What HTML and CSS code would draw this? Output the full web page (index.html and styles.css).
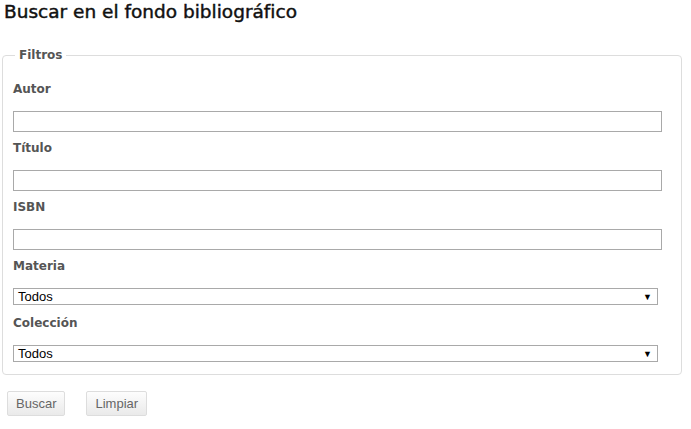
FILE: index.html
```html
<!DOCTYPE html>
<html lang="es">
<head>
<meta charset="utf-8">
<title>Buscar en el fondo bibliográfico</title>
<link rel="stylesheet" href="styles.css">
</head>
<body>
<h1 class="title">Buscar en el fondo bibliográfico</h1>
<form class="search">
  <fieldset class="filters">
    <legend class="legend">Filtros</legend>
    <div class="field">
      <label class="label" for="autor">Autor</label>
      <input class="text" id="autor" type="text">
    </div>
    <div class="field">
      <label class="label" for="titulo">Título</label>
      <input class="text" id="titulo" type="text">
    </div>
    <div class="field">
      <label class="label" for="isbn">ISBN</label>
      <input class="text" id="isbn" type="text">
    </div>
    <div class="field">
      <label class="label" for="materia">Materia</label>
      <div class="select"><span class="select-value">Todos</span><span class="arrow">▼</span></div>
    </div>
    <div class="field">
      <label class="label" for="coleccion">Colección</label>
      <div class="select"><span class="select-value">Todos</span><span class="arrow">▼</span></div>
    </div>
  </fieldset>
  <div class="actions">
    <button class="btn" type="button">Buscar</button>
    <button class="btn" type="button">Limpiar</button>
  </div>
</form>
</body>
</html>
```
FILE: styles.css
```css
html, body {
  margin: 0;
  padding: 0;
  background: #fff;
}
body {
  padding: 0 2px;
  font-family: "DejaVu Sans", Verdana, sans-serif;
  color: #111;
}
.title {
  margin: 0;
  padding: 0 0 0 2px;
  font-size: 18.5px;
  line-height: 23px;
  font-weight: normal;
  -webkit-text-stroke: 0.45px #111;
  color: #111;
  height: 23px;
}
.search {
  margin-top: 25px;
}
.filters {
  margin: 0;
  width: 679px;
  box-sizing: border-box;
  border: 1px solid #ddd;
  border-radius: 4px;
  padding: 19px 19px 10px 10px;
}
.legend {
  padding: 0 4px;
  margin-left: 2px;
  font-size: 12px;
  font-weight: bold;
  color: #555;
  line-height: 14px;
}
.field {
  display: flex;
  flex-direction: column;
}
.label {
  display: block;
  font-size: 12px;
  font-weight: bold;
  color: #555;
  line-height: 16px;
  margin: 0 0 14px;
}
.field + .field .label {
  margin-top: 8px;
}
.text {
  display: block;
  box-sizing: border-box;
  width: 649px;
  height: 21px;
  margin: 0;
  border: 1px solid #a9a9a9;
  background: #fff;
  padding: 0 3px;
}
.select {
  box-sizing: border-box;
  width: 645px;
  height: 17px;
  margin-bottom: 2px;
  border: 1px solid #a9a9a9;
  background: #fff;
  display: flex;
  align-items: center;
  justify-content: space-between;
  padding: 0 5px 0 4px;
  font-family: "Liberation Sans", Arial, sans-serif;
  font-size: 13px;
  color: #000;
}
.arrow {
  font-size: 9px;
  color: #000;
}
.actions {
  display: flex;
  gap: 21px;
  padding: 16px 0 0 5px;
}
.btn {
  height: 25px;
  padding: 0 8px;
  border: 1px solid #ddd;
  border-radius: 2px;
  background: linear-gradient(#fdfdfd, #eaeaea);
  font-family: "Liberation Sans", Arial, sans-serif;
  font-size: 13px;
  color: #666;
}
```
